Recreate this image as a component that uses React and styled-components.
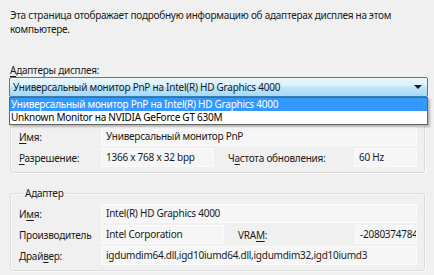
import React from "react";
import styled, { createGlobalStyle } from "styled-components";

const Global = createGlobalStyle`
  html, body { margin: 0; padding: 0; background: #f0f0f0; }
  body {
    font-family: "Noto Sans", "Liberation Sans", sans-serif;
    font-size: 10px;
    letter-spacing: -0.25px;
    color: #1a1a1a;
  }
`;

const Page = styled.div`
  width: 434px;
  height: 275px;
  overflow: hidden;
  padding: 8px 0 0 10px;
  box-sizing: border-box;
  background: #f0f0f0;
`;

const Intro = styled.p`
  margin: 0;
  width: 405px;
  line-height: 14px;
`;

const FieldLabel = styled.div`
  margin-top: 27px;
  line-height: 14px;
`;

const U = styled.span`
  text-decoration: underline;
  text-underline-offset: 2px;
`;

const ComboWrap = styled.div`
  position: relative;
  margin-left: -1px;
  width: 419px;
`;

const Combo = styled.div`
  height: 20px;
  box-sizing: border-box;
  border: 1px solid #3c7fb1;
  border-radius: 2px;
  background: linear-gradient(#eaf6fd 0%, #d9f0fc 45%, #bee6fd 50%, #a7d9f5 100%);
  display: flex;
  align-items: center;
  padding: 0 0 0 3px;
  justify-content: space-between;
`;

const Arrow = styled.span`
  width: 0;
  height: 0;
  border-left: 4px solid transparent;
  border-right: 4px solid transparent;
  border-top: 4px solid #1a1a1a;
  margin-right: 5px;
`;

const List = styled.div`
  position: absolute;
  left: 0;
  top: 20px;
  width: 419px;
  box-sizing: border-box;
  border: 1px solid #646464;
  background: #fff;
  box-shadow: 2px 2px 2px rgba(0, 0, 0, 0.25);
  z-index: 2;
`;

const Item = styled.div`
  height: 13px;
  line-height: 13px;
  padding-left: 1px;
  background: ${(p) => (p.$active ? "#3399ff" : "#fff")};
  color: ${(p) => (p.$active ? "#fff" : "#000")};
`;

const Group = styled.fieldset`
  margin: ${(p) => p.$mt}px 0 0 0;
  width: 415px;
  box-sizing: border-box;
  border: 1px solid #dcdcdc;
  border-radius: 3px;
  box-shadow: inset 1px 1px 0 #fafafa, 1px 1px 0 #fafafa;
  padding: ${(p) => p.$pt}px 7px 5px 7px;
  display: flex;
  flex-direction: column;
  gap: 2px;
`;

const Legend = styled.legend`
  padding: 0 2px;
  margin-left: 5px;
  line-height: 14px;
`;

const Row = styled.div`
  display: grid;
  grid-template-columns: ${(p) => p.$cols};
  align-items: center;
  height: 19px;
`;

const Label = styled.div`
  padding-left: 1px;
`;

const Value = styled.div`
  height: 19px;
  box-sizing: border-box;
  background: #f6f6f6;
  border: 1px solid #fbfbfb;
  line-height: 17px;
  padding: 0 4px;
  white-space: nowrap;
  overflow: hidden;
  text-align: ${(p) => (p.$right ? "right" : "left")};
`;

const Label2 = styled.div`
  padding-left: 14px;
`;

export default function App() {
  return (
    <Page>
      <Global />
      <Intro>
        Эта страница отображает подробную информацию об адаптерах дисплея на этом компьютере.
      </Intro>
      <FieldLabel>
        <U>А</U>даптеры дисплея:
      </FieldLabel>
      <ComboWrap>
        <Combo>
          <span>Универсальный монитор PnP на Intel(R) HD Graphics 4000</span>
          <Arrow />
        </Combo>
        <List>
          <Item $active>Универсальный монитор PnP на Intel(R) HD Graphics 4000</Item>
          <Item>Unknown Monitor на NVIDIA GeForce GT 630M</Item>
        </List>
      </ComboWrap>
      <Group $mt={5} $pt={24}>
        <Row $cols="83px 1fr">
          <Label>
            <U>И</U>мя:
          </Label>
          <Value>Универсальный монитор PnP</Value>
        </Row>
        <Row $cols="83px 113px 140px 1fr">
          <Label>
            <U>Р</U>азрешение:
          </Label>
          <Value>1366 x 768 x 32 bpp</Value>
          <Label2>
            Ч<U>а</U>стота обновления:
          </Label2>
          <Value>60 Hz</Value>
        </Row>
      </Group>
      <Group $mt={13} $pt={4}>
        <Legend>Адаптер</Legend>
        <Row $cols="83px 1fr">
          <Label>
            И<U>м</U>я:
          </Label>
          <Value>Intel(R) HD Graphics 4000</Value>
        </Row>
        <Row $cols="83px 123px 131px 1fr">
          <Label>Производитель</Label>
          <Value>Intel Corporation</Value>
          <Label2>
            VRA<U>M</U>:
          </Label2>
          <Value $right>-2080374784</Value>
        </Row>
        <Row $cols="83px 1fr">
          <Label>
            Драй<U>в</U>ер:
          </Label>
          <Value>igdumdim64.dll,igd10iumd64.dll,igdumdim32,igd10iumd3</Value>
        </Row>
      </Group>
    </Page>
  );
}
